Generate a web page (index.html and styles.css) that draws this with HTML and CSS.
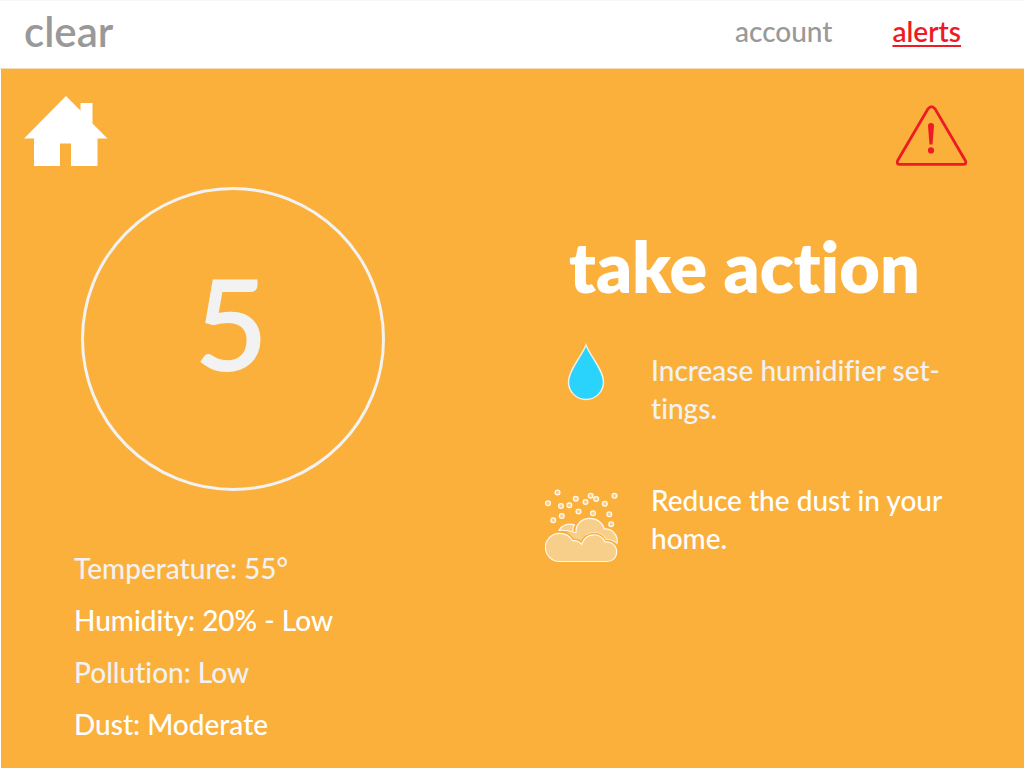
FILE: index.html
```html
<!DOCTYPE html>
<html lang="en">
<head>
<meta charset="utf-8">
<meta name="viewport" content="width=device-width, initial-scale=1">
<title>clear</title>
<link rel="stylesheet" href="styles.css">
</head>
<body>
<header class="site-header">
  <a class="brand" href="#">clear</a>
  <nav class="nav">
    <a class="nav-link" href="#">account</a>
    <a class="nav-link nav-link-active" href="#" aria-current="page">alerts</a>
  </nav>
</header>
<main class="page">
  <div class="toolbar">
    <a class="tool" href="#" aria-label="Home">
      <svg width="84" height="70" viewBox="0 0 84 70" fill="#fff" aria-hidden="true"><path d="M42 0 56.500 14.500V7h12v20.500L83.500 42.500H73.500V70H47V47.500H36V70H10V42.500H0z"/></svg>
    </a>
    <a class="tool" href="#" aria-label="Alerts">
      <svg width="72" height="62" viewBox="0 0 72 62" fill="none" aria-hidden="true"><path d="M32 4.800Q35.500 .4 39 4.800L69 56Q71.300 60.400 67 60.400H4Q-.3 60.400 2 56Z" stroke="#ed1c24" stroke-width="2.800"/><path d="M32 22Q32 19 35 19t3 3L36.500 40.500H33.500zM35 43.300a3.100 3.100 0 1 1 0 6.200a3.100 3.100 0 1 1 0-6.200z" fill="#ed1c24"/></svg>
    </a>
  </div>
  <div class="columns">
    <section class="status" aria-label="Air quality">
      <div class="score">5</div>
      <ul class="readings">
        <li class="reading">Temperature: 55°</li>
        <li class="reading reading-alert">Humidity: 20% - Low</li>
        <li class="reading">Pollution: Low</li>
        <li class="reading reading-alert">Dust: Moderate</li>
      </ul>
    </section>
    <section class="actions">
      <h1 class="title">take action</h1>
      <ul class="action-list">
        <li class="action">
          <svg class="action-icon" width="82" height="58" viewBox="0 0 82 58" aria-hidden="true"><path d="M41 2C37 13 23.500 27 23.500 39a17.500 17.500 0 0 0 35 0C58.500 27 45 13 41 2z" fill="#29d3fc" stroke="#f8f0df" stroke-width="1.400"/></svg>
          <p class="action-text">Increase humidifier set-<br>tings.</p>
        </li>
        <li class="action action-strong">
          <svg class="action-icon" width="82" height="76" viewBox="0 0 82 76" fill="#f7cf8b" stroke="#fff8ea" stroke-width="1.200" aria-hidden="true">
            <path d="M14 41.500C17 36 23 34 29.300 35.800Q27.300 39 27.800 43.300Q21 40.500 14 41.500z"/>
            <path d="M28.300 43.300L31 43.500C30.500 35 37 29.300 45 29.300C52 29.300 58 34 59.300 40C67 39.500 73.500 46 72 54.300Q67 50.300 61 50.500C56 41.500 41 41 36.700 53.500Q34 50.500 28.800 50Q26 46 22 43.500"  stroke="none"/>
            <path d="M28.300 43.500L31 43.500C30.500 35 37 29.300 45 29.300C52 29.300 58 34 59.300 40C67 39.500 73.500 46 72 54.300Q67 50.300 61 50.500C56 41.500 41 41 36.700 53" fill="none"/>
            <path d="M14.500 72.500a14 14 0 0 1 0-28.200C21 44.300 25 47 27.500 51.700Q33 51 36.700 55.300C41 43 55.500 43 60 53C67 52 71.700 57 71.700 63C71.700 68.500 67.500 72.500 62 72.500z" stroke="#fbb03b" stroke-width="4"/>
            <path d="M14.500 72.500a14 14 0 0 1 0-28.200C21 44.300 25 47 27.500 51.700Q33 51 36.700 55.300C41 43 55.500 43 60 53C67 52 71.700 57 71.700 63C71.700 68.500 67.500 72.500 62 72.500z"/>
            <g stroke-width="1.300"><circle cx="12.500" cy="3.500" r="2.400"/><circle cx="3" cy="14.300" r="2.400"/><circle cx="16" cy="17" r="2.400"/><circle cx="24.300" cy="16.200" r="2.400"/><circle cx="30.800" cy="9.700" r="2.400"/><circle cx="40.500" cy="13" r="2.400"/><circle cx="45.700" cy="6.700" r="2.400"/><circle cx="51.200" cy="10" r="2.400"/><circle cx="59.800" cy="14.700" r="2.400"/><circle cx="69.500" cy="6.700" r="2.400"/><circle cx="33.500" cy="22.500" r="2.400"/><circle cx="48" cy="24.300" r="2.400"/><circle cx="64.300" cy="25.300" r="2.400"/><circle cx="66.200" cy="35.300" r="2.400"/><circle cx="16.800" cy="27" r="2.400"/><circle cx="8.200" cy="31.300" r="2.400"/></g>
          </svg>
          <p class="action-text">Reduce the dust in your home.</p>
        </li>
      </ul>
    </section>
  </div>
</main>
</body>
</html>
```
FILE: styles.css
```css
* {
  box-sizing: border-box;
}

body {
  margin: 0;
  min-height: 100vh;
  display: flex;
  flex-direction: column;
  background: #fff;
  color: #f2f2f2;
  font-family: Lato, "Open Sans", sans-serif;
  font-variant-ligatures: none;
}

.site-header {
  display: flex;
  align-items: center;
  justify-content: space-between;
  height: 69px;
  padding: 0 63px 8px 24px;
  border-top: 1px solid #f7f7f7;
  border-bottom: 1px solid #f3dcb8;
}

.brand {
  color: #999;
  font-size: 42px;
  font-weight: 600;
  line-height: 48px;
  text-decoration: none;
}

.nav {
  display: flex;
  gap: 60px;
}

.nav-link {
  color: #999;
  font-size: 28px;
  font-weight: 500;
  line-height: 32px;
  text-decoration: none;
}

.nav-link-active {
  color: #ed1c24;
  font-weight: 600;
  text-decoration: underline;
  text-decoration-thickness: 2px;
  text-underline-offset: 3px;
}

.page {
  flex: 1;
  margin-left: 1px;
  padding: 27px 56px 16px 23px;
  background: #fbb03b;
}

.toolbar {
  display: flex;
  align-items: flex-end;
  justify-content: space-between;
}

.tool,
.tool svg {
  display: block;
}

.columns {
  display: grid;
  grid-template-columns: 521px 1fr;
  padding-top: 21px;
}

.score {
  display: flex;
  justify-content: center;
  width: 304px;
  height: 304px;
  margin-left: 57px;
  padding: 57px 4px 0 0;
  border: 3px solid #f2f2f2;
  border-radius: 50%;
  font-size: 128px;
  font-weight: 600;
  line-height: 150px;
}

.readings,
.action-list {
  margin: 0;
  padding: 0;
  list-style: none;
}

.readings {
  padding: 51px 0 0 50px;
}

.reading {
  font-size: 28px;
  font-weight: 500;
  line-height: 52px;
}

.reading-alert,
.action-strong {
  color: #fff;
}

.title {
  margin: 0;
  padding: 37px 0 0 24px;
  color: #fff;
  font-size: 70px;
  font-weight: 800;
  line-height: 84px;
}

.action-list {
  display: flex;
  flex-direction: column;
  gap: 54px;
  padding-top: 35px;
}

.action {
  display: flex;
  gap: 24px;
  font-size: 28px;
  font-weight: 500;
  line-height: 38px;
}

.action-icon {
  flex: none;
}

.action-text {
  flex: 1;
  margin: 0;
  padding-top: 8px;
}

.action-strong .action-icon {
  margin-top: 8px;
}

.action-strong .action-text {
  padding-top: 0;
}

@media (max-width: 900px) {
  .columns {
    grid-template-columns: 1fr;
    gap: 32px;
  }
}
```
